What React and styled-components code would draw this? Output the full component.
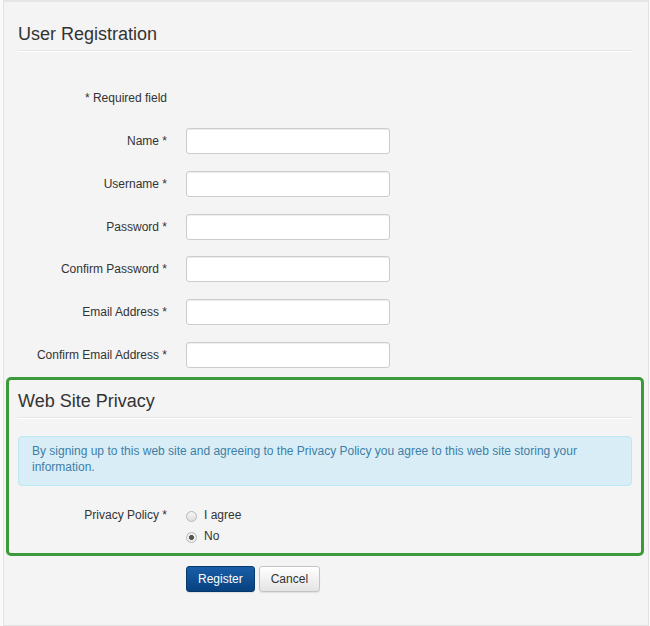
import React from "react";
import styled, { createGlobalStyle } from "styled-components";

const fields = [
  "Name",
  "Username",
  "Password",
  "Confirm Password",
  "Email Address",
  "Confirm Email Address"
];

const privacyOptions = [
  { label: "I agree", checked: false },
  { label: "No", checked: true }
];

const GlobalStyle = createGlobalStyle`
  body {
    margin: 0;
    background: #fafafa;
    font-family: "Liberation Sans", Arial, sans-serif;
    color: #333;
  }
`;

const Well = styled.div`
  box-sizing: border-box;
  min-height: 100vh;
  margin: 0 1px 0 3px;
  padding: 20px 4px 0 2px;
  background: #f4f4f4;
  border: 1px solid #e2e2e2;
  border-top: 2px solid #e6e6e6;
`;

const Section = styled.div`
  padding: ${props => (props.boxed ? "9px 9px 8px" : "0 12px")};
  margin-top: ${props => (props.boxed ? "9px" : "0")};
  border: ${props => (props.boxed ? "3px solid #3b9b3b" : "none")};
  border-radius: 5px;
`;

const Heading = styled.h2`
  margin: 0;
  padding-bottom: 4px;
  font-size: 18px;
  font-weight: normal;
  line-height: 24px;
  color: #333;
  border-bottom: 1px solid #e5e5e5;
  box-shadow: 0 1px 0 #fff;
`;

const Row = styled.div`
  display: grid;
  grid-template-columns: 149px auto;
  column-gap: 19px;
  align-items: ${props => props.align || "center"};
  margin-top: ${props => props.top || 0}px;
`;

const Label = styled.label`
  text-align: right;
  font-size: 12px;
  line-height: 18px;
  color: #333;
`;

const FieldList = styled.div`
  display: flex;
  flex-direction: column;
  gap: 16.8px;
  margin-top: 21px;
`;

const Input = styled.input`
  box-sizing: border-box;
  width: 204px;
  height: 26px;
  padding: 4px 6px;
  background: #fff;
  border: 1px solid #ccc;
  border-radius: 3px;
  box-shadow: inset 0 1px 1px rgba(0, 0, 0, 0.075);
  font: 12px "Liberation Sans", Arial, sans-serif;
`;

const Alert = styled.div`
  margin-top: 18px;
  padding: 6px 14px 9px 13px;
  background: #d9edf7;
  border: 1px solid #bce8f1;
  border-radius: 4px;
  color: #3d7fa6;
  font-size: 12px;
  line-height: 16.5px;
`;

const RadioGroup = styled.div`
  display: flex;
  flex-direction: column;
  gap: 3px;
`;

const RadioOption = styled.label`
  display: flex;
  align-items: center;
  gap: 7px;
  font-size: 12px;
  line-height: 18px;
  color: #333;
`;

const RadioDot = styled.span`
  box-sizing: border-box;
  width: 11px;
  height: 11px;
  margin-top: 3px;
  border-radius: 50%;
  border: 1px solid #b8b8b8;
  background: ${props =>
    props.checked
      ? "radial-gradient(circle, #555 0 2.2px, #eee 2.8px)"
      : "linear-gradient(#f6f6f6, #dedede)"};
`;

const Buttons = styled.div`
  display: flex;
  gap: 4px;
`;

const Button = styled.button`
  height: 26px;
  padding: 0 11px;
  border-radius: 3px;
  font: 12px "Liberation Sans", Arial, sans-serif;
  color: ${props => (props.primary ? "#fff" : "#333")};
  border: 1px solid ${props => (props.primary ? "#06396d" : "#c4c4c4")};
  background: ${props =>
    props.primary
      ? "linear-gradient(#1a5ea8, #07417f)"
      : "linear-gradient(#ffffff, #e4e4e4)"};
  box-shadow: 0 1px 1px rgba(0, 0, 0, 0.08);
`;

const App = () => (
  <>
    <GlobalStyle />
    <Well>
      <Section>
        <Heading>User Registration</Heading>
        <Row top={38}>
          <Label>* Required field</Label>
        </Row>
        <FieldList>
          {fields.map(name => (
            <Row key={name}>
              <Label>{name} *</Label>
              <Input type={name.includes("Password") ? "password" : "text"} />
            </Row>
          ))}
        </FieldList>
      </Section>

      <Section boxed>
        <Heading>Web Site Privacy</Heading>
        <Alert>
          By signing up to this web site and agreeing to the Privacy Policy you
          agree to this web site storing your information.
        </Alert>
        <Row top={20} align="start">
          <Label>Privacy Policy *</Label>
          <RadioGroup>
            {privacyOptions.map(opt => (
              <RadioOption key={opt.label}>
                <RadioDot checked={opt.checked} />
                {opt.label}
              </RadioOption>
            ))}
          </RadioGroup>
        </Row>
      </Section>

      <Section>
        <Row top={10}>
          <span />
          <Buttons>
            <Button primary>Register</Button>
            <Button>Cancel</Button>
          </Buttons>
        </Row>
      </Section>
    </Well>
  </>
);

export default App;
